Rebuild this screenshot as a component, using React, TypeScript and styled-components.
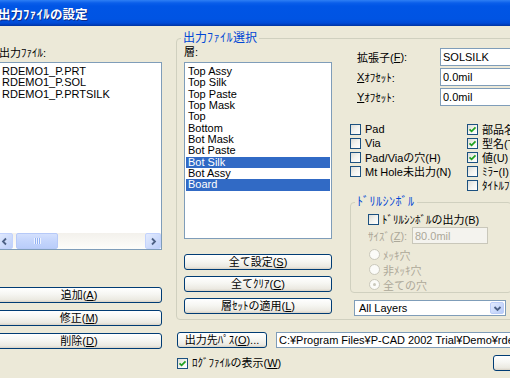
import React from 'react'
import styled, { createGlobalStyle } from 'styled-components'

const GlobalStyle = createGlobalStyle`
  html, body {
    margin: 0;
    padding: 0;
    background: #ece9d8;
    overflow: hidden;
  }
  body {
    font-family: 'Liberation Sans', 'Noto Sans CJK JP', sans-serif;
    font-size: 11px;
    color: #000;
  }
`

const Screen = styled.div`
  width: 510px;
  height: 378px;
  overflow: hidden;
  background: #ece9d8;
`

const Window = styled.div`
  width: 600px;
  margin-left: -10px;
`

const TitleBar = styled.div`
  height: 26px;
  box-sizing: border-box;
  padding-left: 8px;
  display: flex;
  align-items: center;
  background: linear-gradient(
    180deg,
    #2e7ff4 0px,
    #0a5eea 3px,
    #0055e5 6px,
    #0054e3 19px,
    #004bd7 23px,
    #003cb6 25px,
    #00339c 26px
  );
`

const TitleText = styled.span`
  color: #fff;
  font-family: 'Noto Sans CJK JP', sans-serif;
  font-weight: bold;
  font-size: 12.5px;
  line-height: 14px;
  text-shadow: 1px 1px 0 #0b2a8a;
  margin-top: 1px;
`

// half-width katakana in the themed captions sit a little wider
const Kana = styled.span`
  letter-spacing: 0.5px;
`

const jp = (text: string) =>
  text.split(/([\uFF61-\uFF9F]+)/).map((part, i) => (i % 2 ? <Kana key={i}>{part}</Kana> : part))

const Body = styled.div`
  display: flex;
  gap: 14px;
  padding: 6px 0 0 6px;
  height: 352px;
  box-sizing: border-box;
  background: #ece9d8;
`

const LeftCol = styled.div`
  width: 166px;
  flex: none;
  display: flex;
  flex-direction: column;
  padding-top: 15px;
`

const Label = styled.div<{ $disabled?: boolean }>`
  line-height: 13px;
  color: ${({ $disabled }) => ($disabled ? '#aca899' : '#000')};
  white-space: nowrap;
`

const Acc = styled.span`
  text-decoration: underline;
`

const ListBox = styled.div<{ $height: number; $top: number }>`
  margin-top: ${({ $top }) => $top}px;
  height: ${({ $height }) => $height}px;
  box-sizing: border-box;
  border: 1px solid #7f9db9;
  background: #fff;
  display: flex;
  flex-direction: column;
  overflow: hidden;
`

const ListItems = styled.div<{ $indent: number }>`
  padding: 3px 1px 0;
  & > div {
    padding-left: ${({ $indent }) => $indent}px;
  }
`

const ListItem = styled.div<{ $selected?: boolean }>`
  height: 11.33px;
  line-height: 11.33px;
  white-space: nowrap;
  background: ${({ $selected }) => ($selected ? '#316ac5' : 'transparent')};
  color: ${({ $selected }) => ($selected ? '#fff' : '#000')};
`

const HScroll = styled.div`
  margin-top: auto;
  height: 16px;
  display: flex;
  align-items: stretch;
  background: linear-gradient(180deg, #f3f1ec 0%, #fdfdfa 100%);
`

const ScrollArrow = styled.div<{ $end?: boolean }>`
  width: 16px;
  flex: none;
  box-sizing: border-box;
  border: 1px solid #c3d3fd;
  border-radius: 2px;
  background: linear-gradient(135deg, #e3ebfe 0%, #bdcff9 100%);
  display: flex;
  align-items: center;
  justify-content: center;
  margin-left: ${({ $end }) => ($end ? 'auto' : '0')};
`

const ScrollThumb = styled.div`
  width: 42px;
  margin-left: 3px;
  box-sizing: border-box;
  border: 1px solid #b6c9f8;
  border-radius: 2px;
  background: linear-gradient(180deg, #d4e0fd 0%, #c4d5fc 50%, #b9cdfa 100%);
  display: flex;
  align-items: center;
  justify-content: center;
`

const Grip = styled.span`
  width: 7px;
  height: 6px;
  background: repeating-linear-gradient(90deg, #eef3fe 0 1px, #93b2f4 1px 2px);
`

const ButtonStack = styled.div<{ $top: number; $gap: number }>`
  margin-top: ${({ $top }) => $top}px;
  display: flex;
  flex-direction: column;
  gap: ${({ $gap }) => $gap}px;
`

const PushButton = styled.div<{ $width?: number }>`
  height: 16px;
  width: ${({ $width }) => ($width ? `${$width}px` : 'auto')};
  flex: none;
  box-sizing: border-box;
  border: 1px solid #003c74;
  border-radius: 3px;
  background: linear-gradient(180deg, #ffffff 0%, #f6f6f2 45%, #ebe9e1 85%, #d8d2c6 100%);
  display: flex;
  align-items: center;
  justify-content: center;
  line-height: 13px;
  white-space: nowrap;
`

const RightCol = styled.div`
  width: 392px;
  flex: none;
  display: flex;
  flex-direction: column;
`

const GroupBox = styled.fieldset<{ $width?: number; $pad: string; $top?: number }>`
  margin: ${({ $top }) => $top ?? 0}px 0 0 0;
  padding: ${({ $pad }) => $pad};
  border: 1px solid #d0d0bf;
  border-radius: 4px;
  min-width: 0;
  box-sizing: border-box;
  width: ${({ $width }) => ($width ? `${$width}px` : 'auto')};
`

const Legend = styled.legend<{ $shift: number }>`
  padding: 0 2px;
  margin-left: ${({ $shift }) => $shift}px;
  color: #0046d5;
  font-size: 12px;
  line-height: 13px;
  white-space: nowrap;
`

const GroupInner = styled.div`
  display: flex;
`

const LayerCol = styled.div`
  width: 148px;
  flex: none;
  display: flex;
  flex-direction: column;
`

const SettingsCol = styled.div`
  margin-left: 18px;
  flex: 1;
  min-width: 0;
  padding-top: 2px;
  display: flex;
  flex-direction: column;
`

const FieldRow = styled.div`
  display: flex;
  height: 18px;
  margin-bottom: 2px;
`

const FieldLabel = styled.div<{ $width: number; $indent: number; $disabled?: boolean }>`
  width: ${({ $width }) => $width}px;
  padding-left: ${({ $indent }) => $indent}px;
  box-sizing: border-box;
  flex: none;
  display: flex;
  align-items: center;
  color: ${({ $disabled }) => ($disabled ? '#aca899' : '#000')};
  white-space: nowrap;
`

const TextBox = styled.div<{ $width: number; $disabled?: boolean }>`
  width: ${({ $width }) => $width}px;
  flex: none;
  box-sizing: border-box;
  border: 1px solid ${({ $disabled }) => ($disabled ? '#c9c7ba' : '#7f9db9')};
  background: ${({ $disabled }) => ($disabled ? '#f4f3ee' : '#fff')};
  color: ${({ $disabled }) => ($disabled ? '#aca899' : '#000')};
  padding-left: 2px;
  display: flex;
  align-items: center;
  white-space: nowrap;
  overflow: hidden;
`

const CheckArea = styled.div`
  display: flex;
  margin-top: 14px;
`

const CheckColumn = styled.div<{ $width?: number }>`
  width: ${({ $width }) => ($width ? `${$width}px` : 'auto')};
  flex: none;
  display: flex;
  flex-direction: column;
`

const CheckRow = styled.div<{ $gap: number; $height: number; $disabled?: boolean }>`
  height: ${({ $height }) => $height}px;
  display: flex;
  align-items: center;
  gap: ${({ $gap }) => $gap}px;
  white-space: nowrap;
  color: ${({ $disabled }) => ($disabled ? '#aca899' : '#000')};
`

const Box = styled.span<{ $disabled?: boolean }>`
  width: 11px;
  height: 11px;
  flex: none;
  box-sizing: border-box;
  border: 1px solid ${({ $disabled }) => ($disabled ? '#cac8bb' : '#1c5180')};
  background: linear-gradient(135deg, #dcdcd7 0%, #f3f3ef 50%, #ffffff 100%);
  display: flex;
  align-items: center;
  justify-content: center;
`

const RadioDot = styled.span`
  width: 11px;
  height: 11px;
  flex: none;
  box-sizing: border-box;
  border: 1px solid #cac8bb;
  border-radius: 50%;
  background: #fbfbf8;
  margin-left: 1px;
  display: flex;
  align-items: center;
  justify-content: center;
`

const RadioFill = styled.span`
  width: 3px;
  height: 3px;
  border-radius: 50%;
  background: #cac8bb;
`

const DrillBody = styled.div`
  display: flex;
  flex-direction: column;
`

const SizeRow = styled.div`
  display: flex;
  height: 17px;
  margin-top: 1px;
`

const RadioList = styled.div`
  margin-top: 3px;
  display: flex;
  flex-direction: column;
`

const Combo = styled.div`
  margin: 7px 0 0 4px;
  width: 152px;
  height: 16px;
  box-sizing: border-box;
  border: 1px solid #7f9db9;
  background: #fff;
  display: flex;
  align-items: stretch;
`

const ComboText = styled.div`
  flex: 1;
  padding-left: 4px;
  display: flex;
  align-items: center;
`

const ComboButton = styled.div`
  width: 14px;
  margin: 1px;
  box-sizing: border-box;
  border: 1px solid #bccdf8;
  border-radius: 2px;
  background: linear-gradient(135deg, #e3ebfe 0%, #b6cbf9 100%);
  display: flex;
  align-items: center;
  justify-content: center;
`

const PathRow = styled.div`
  margin-top: 12px;
  height: 16px;
  display: flex;
  gap: 9px;
  padding-left: 1px;
`

const LogRow = styled.div`
  margin-top: 7px;
  height: 16px;
  display: flex;
  align-items: center;
  padding-left: 1px;
`

const OkButton = styled(PushButton)`
  margin-left: auto;
`

const Chevron = ({ dir }: { dir: 'left' | 'right' | 'down' }) => {
  const d =
    dir === 'left' ? 'M5 1.5 L2 4.5 L5 7.5' : dir === 'right' ? 'M3 1.5 L6 4.5 L3 7.5' : 'M1.5 3 L4.5 6 L7.5 3'
  return (
    <svg width="9" height="9" viewBox="0 0 9 9">
      <path d={d} fill="none" stroke="#4d6185" strokeWidth="1.8" />
    </svg>
  )
}

const Check = ({ checked, disabled }: { checked?: boolean; disabled?: boolean }) => (
  <Box $disabled={disabled}>
    {checked && (
      <svg width="9" height="9" viewBox="0 0 9 9">
        <path d="M1.5 4.3 L3.6 6.4 L7.5 2.3" fill="none" stroke="#21a121" strokeWidth="1.7" />
      </svg>
    )}
  </Box>
)

const outputFiles = ['RDEMO1_P.PRT', 'RDEMO1_P.SOL', 'RDEMO1_P.PRTSILK']

const layers = [
  'Top Assy',
  'Top Silk',
  'Top Paste',
  'Top Mask',
  'Top',
  'Bottom',
  'Bot Mask',
  'Bot Paste',
  'Bot Silk',
  'Bot Assy',
  'Board',
]
const selectedLayers = ['Bot Silk', 'Board']

const leftChecks = ['Pad', 'Via', 'Pad/Viaの穴(H)', 'Mt Hole未出力(N)']
const rightChecks = [
  { label: '部品名(R)', checked: true },
  { label: '型名(T)', checked: true },
  { label: '値(U)', checked: true },
  { label: 'ﾐﾗｰ(I)', checked: false },
  { label: 'ﾀｲﾄﾙﾌﾞﾛｯｸ(K)', checked: false },
]

const holes = [
  { label: 'ﾒｯｷ穴', on: false },
  { label: '非ﾒｯｷ穴', on: false },
  { label: '全ての穴', on: true },
]

const App = () => {
  return (
    <Screen>
      <GlobalStyle />
      <Window>
        <TitleBar>
          <TitleText>{jp('出力ﾌｧｲﾙの設定')}</TitleText>
        </TitleBar>
        <Body>
          <LeftCol>
            <Label style={{ paddingLeft: 3 }}>出力ﾌｧｲﾙ:</Label>
            <ListBox $height={188} $top={2}>
              <ListItems $indent={4}>
                {outputFiles.map((f) => (
                  <ListItem key={f}>{f}</ListItem>
                ))}
              </ListItems>
              <HScroll>
                <ScrollArrow>
                  <Chevron dir="left" />
                </ScrollArrow>
                <ScrollThumb>
                  <Grip />
                </ScrollThumb>
                <ScrollArrow $end>
                  <Chevron dir="right" />
                </ScrollArrow>
              </HScroll>
            </ListBox>
            <ButtonStack $top={37} $gap={7}>
              <PushButton>
                追加(<Acc>A</Acc>)
              </PushButton>
              <PushButton>
                修正(<Acc>M</Acc>)
              </PushButton>
              <PushButton>
                削除(<Acc>D</Acc>)
              </PushButton>
            </ButtonStack>
          </LeftCol>

          <RightCol>
            <GroupBox $pad="1px 0 3px 7px">
              <Legend $shift={-3}>{jp('出力ﾌｧｲﾙ選択')}</Legend>
              <GroupInner>
                <LayerCol>
                  <Label>層:</Label>
                  <ListBox $height={177} $top={3}>
                    <ListItems $indent={2}>
                      {layers.map((l) => (
                        <ListItem key={l} $selected={selectedLayers.includes(l)}>
                          {l}
                        </ListItem>
                      ))}
                    </ListItems>
                  </ListBox>
                  <ButtonStack $top={15} $gap={6}>
                    <PushButton>
                      全て設定(<Acc>S</Acc>)
                    </PushButton>
                    <PushButton>
                      全てｸﾘｱ(<Acc>C</Acc>)
                    </PushButton>
                    <PushButton>
                      層ｾｯﾄの適用(<Acc>L</Acc>)
                    </PushButton>
                  </ButtonStack>
                </LayerCol>

                <SettingsCol>
                  <FieldRow>
                    <FieldLabel $width={90} $indent={7}>
                      拡張子(<Acc>F</Acc>):
                    </FieldLabel>
                    <TextBox $width={100}>SOLSILK</TextBox>
                  </FieldRow>
                  <FieldRow>
                    <FieldLabel $width={90} $indent={7}>
                      <Acc>X</Acc>ｵﾌｾｯﾄ:
                    </FieldLabel>
                    <TextBox $width={100}>0.0mil</TextBox>
                  </FieldRow>
                  <FieldRow>
                    <FieldLabel $width={90} $indent={7}>
                      <Acc>Y</Acc>ｵﾌｾｯﾄ:
                    </FieldLabel>
                    <TextBox $width={100}>0.0mil</TextBox>
                  </FieldRow>

                  <CheckArea>
                    <CheckColumn $width={117}>
                      {leftChecks.map((c) => (
                        <CheckRow key={c} $gap={4} $height={14}>
                          <Check />
                          {c}
                        </CheckRow>
                      ))}
                    </CheckColumn>
                    <CheckColumn>
                      {rightChecks.map((c) => (
                        <CheckRow key={c.label} $gap={4} $height={14}>
                          <Check checked={c.checked} />
                          {c.label}
                        </CheckRow>
                      ))}
                    </CheckColumn>
                  </CheckArea>

                  <GroupBox $width={162} $pad="3px 0 0 17px" $top={4}>
                    <Legend $shift={-13}>{jp('ﾄﾞﾘﾙｼﾝﾎﾞﾙ')}</Legend>
                    <DrillBody>
                      <CheckRow $gap={3} $height={14}>
                        <Check />
                        ﾄﾞﾘﾙｼﾝﾎﾞﾙの出力(B)
                      </CheckRow>
                      <SizeRow>
                        <FieldLabel $width={44} $indent={0} $disabled>
                          ｻｲｽﾞ(<Acc>Z</Acc>):
                        </FieldLabel>
                        <TextBox $width={76} $disabled>
                          80.0mil
                        </TextBox>
                      </SizeRow>
                      <RadioList>
                        {holes.map((h) => (
                          <CheckRow key={h.label} $gap={3} $height={15} $disabled>
                            <RadioDot>{h.on && <RadioFill />}</RadioDot>
                            {h.label}
                          </CheckRow>
                        ))}
                      </RadioList>
                    </DrillBody>
                  </GroupBox>

                  <Combo>
                    <ComboText>All Layers</ComboText>
                    <ComboButton>
                      <Chevron dir="down" />
                    </ComboButton>
                  </Combo>
                </SettingsCol>
              </GroupInner>
            </GroupBox>

            <PathRow>
              <PushButton $width={90}>
                出力先ﾊﾟｽ(<Acc>O</Acc>)...
              </PushButton>
              <TextBox $width={300}>C:¥Program Files¥P-CAD 2002 Trial¥Demo¥rdemo1</TextBox>
            </PathRow>

            <LogRow>
              <Check checked />
              <Label style={{ marginLeft: 4 }}>
                ﾛｸﾞﾌｧｲﾙの表示(<Acc>W</Acc>)
              </Label>
              <OkButton $width={75}>OK</OkButton>
            </LogRow>
          </RightCol>
        </Body>
      </Window>
    </Screen>
  )
}

export default App
